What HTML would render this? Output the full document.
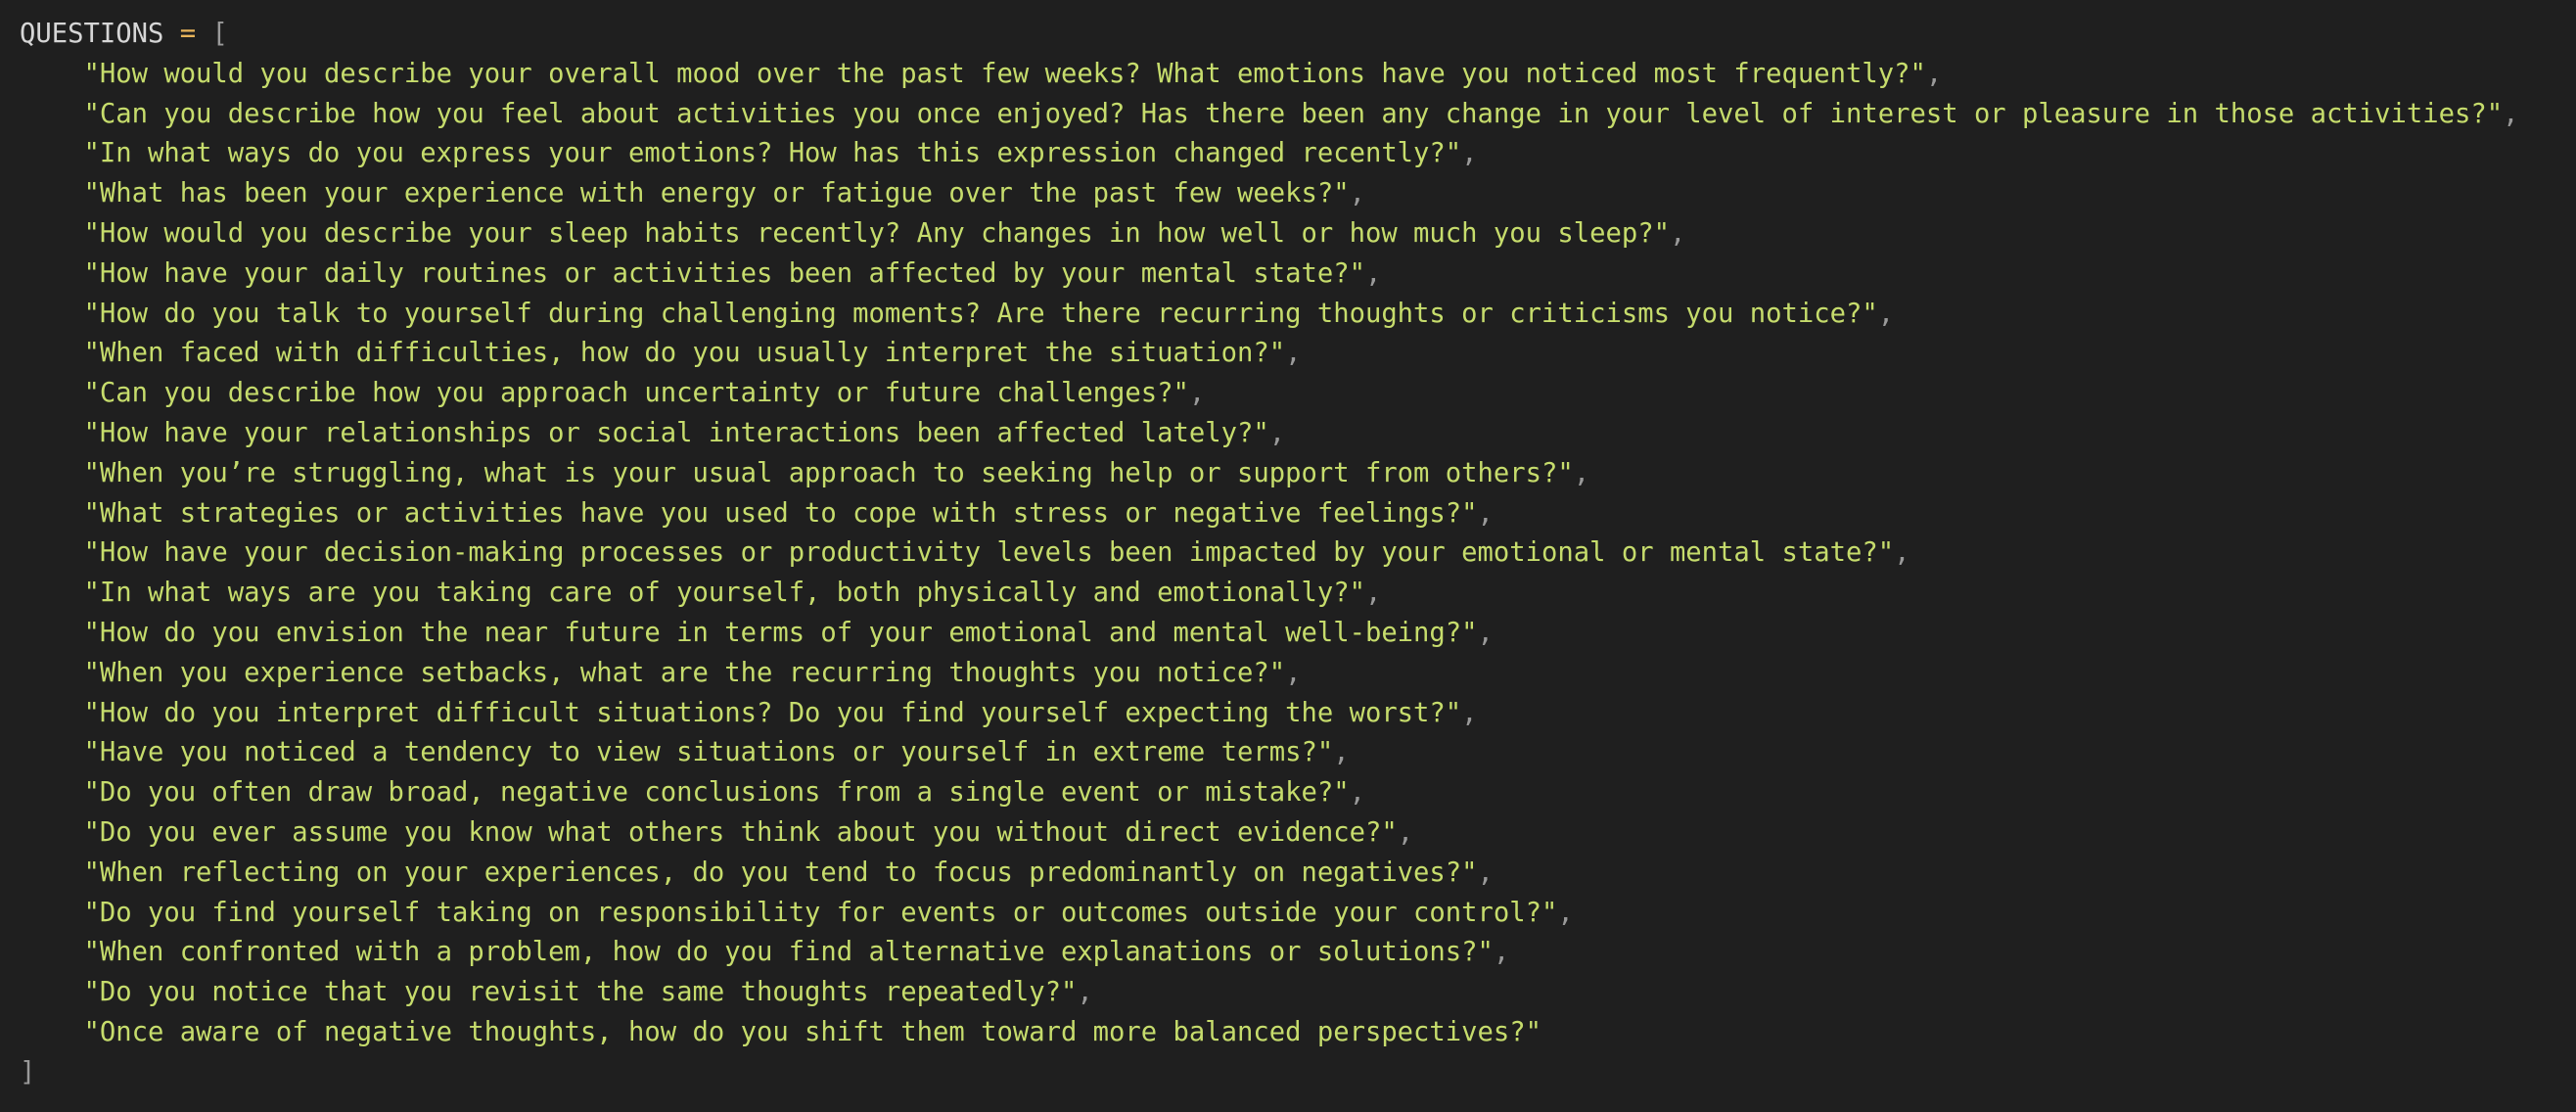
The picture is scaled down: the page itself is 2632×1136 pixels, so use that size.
<!DOCTYPE html>
<html><head><style>
html,body{margin:0;padding:0;background:#1f1f1f;width:2632px;height:1136px;overflow:hidden}
pre{margin:0;padding:15px 0 0 20px;font-family:"DejaVu Sans Mono","Liberation Mono",monospace;font-size:27.2px;line-height:40.8px;color:#d6d6d6}
.s{color:#c6dc6c}.o{color:#e8b45a}.p{color:#9a9a9a}
</style></head><body><pre>QUESTIONS <span class="o">=</span> <span class="p">[</span>
    <span class="s">"How would you describe your overall mood over the past few weeks? What emotions have you noticed most frequently?"</span><span class="p">,</span>
    <span class="s">"Can you describe how you feel about activities you once enjoyed? Has there been any change in your level of interest or pleasure in those activities?"</span><span class="p">,</span>
    <span class="s">"In what ways do you express your emotions? How has this expression changed recently?"</span><span class="p">,</span>
    <span class="s">"What has been your experience with energy or fatigue over the past few weeks?"</span><span class="p">,</span>
    <span class="s">"How would you describe your sleep habits recently? Any changes in how well or how much you sleep?"</span><span class="p">,</span>
    <span class="s">"How have your daily routines or activities been affected by your mental state?"</span><span class="p">,</span>
    <span class="s">"How do you talk to yourself during challenging moments? Are there recurring thoughts or criticisms you notice?"</span><span class="p">,</span>
    <span class="s">"When faced with difficulties, how do you usually interpret the situation?"</span><span class="p">,</span>
    <span class="s">"Can you describe how you approach uncertainty or future challenges?"</span><span class="p">,</span>
    <span class="s">"How have your relationships or social interactions been affected lately?"</span><span class="p">,</span>
    <span class="s">"When you’re struggling, what is your usual approach to seeking help or support from others?"</span><span class="p">,</span>
    <span class="s">"What strategies or activities have you used to cope with stress or negative feelings?"</span><span class="p">,</span>
    <span class="s">"How have your decision-making processes or productivity levels been impacted by your emotional or mental state?"</span><span class="p">,</span>
    <span class="s">"In what ways are you taking care of yourself, both physically and emotionally?"</span><span class="p">,</span>
    <span class="s">"How do you envision the near future in terms of your emotional and mental well-being?"</span><span class="p">,</span>
    <span class="s">"When you experience setbacks, what are the recurring thoughts you notice?"</span><span class="p">,</span>
    <span class="s">"How do you interpret difficult situations? Do you find yourself expecting the worst?"</span><span class="p">,</span>
    <span class="s">"Have you noticed a tendency to view situations or yourself in extreme terms?"</span><span class="p">,</span>
    <span class="s">"Do you often draw broad, negative conclusions from a single event or mistake?"</span><span class="p">,</span>
    <span class="s">"Do you ever assume you know what others think about you without direct evidence?"</span><span class="p">,</span>
    <span class="s">"When reflecting on your experiences, do you tend to focus predominantly on negatives?"</span><span class="p">,</span>
    <span class="s">"Do you find yourself taking on responsibility for events or outcomes outside your control?"</span><span class="p">,</span>
    <span class="s">"When confronted with a problem, how do you find alternative explanations or solutions?"</span><span class="p">,</span>
    <span class="s">"Do you notice that you revisit the same thoughts repeatedly?"</span><span class="p">,</span>
    <span class="s">"Once aware of negative thoughts, how do you shift them toward more balanced perspectives?"</span>
<span class="p">]</span></pre></body></html>
